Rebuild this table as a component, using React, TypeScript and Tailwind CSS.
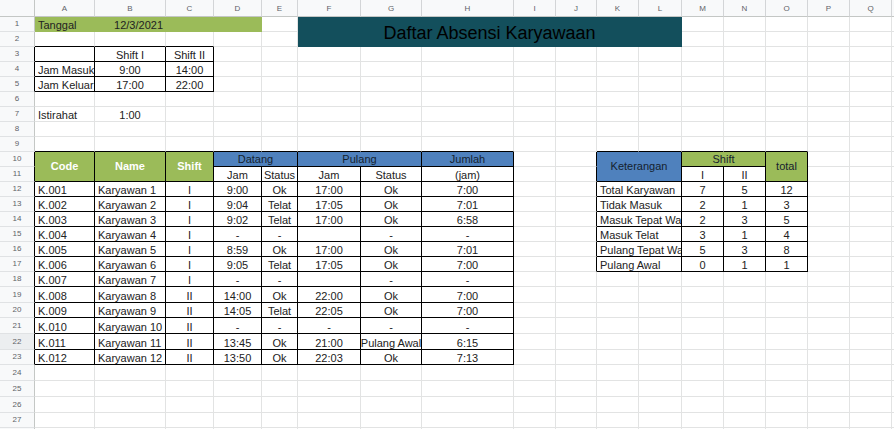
import React from 'react';

type Fill = 'green' | 'teal' | 'blue';
type Kind = 'body' | 'hw' | 'hd' | 'title';
type Cell = {
  text?: string;
  cs?: number;
  rs?: number;
  align?: 'l' | 'c' | 'r';
  fill?: Fill;
  kind?: Kind;
};

const NC = 18;
const NR = 28;
const LETTERS = ['A', 'B', 'C', 'D', 'E', 'F', 'G', 'H', 'I', 'J', 'K', 'L', 'M', 'N', 'O', 'P', 'Q', ''];

const MAIN: string[][] = [
  ['K.001', 'Karyawan 1', 'I', '9:00', 'Ok', '17:00', 'Ok', '7:00'],
  ['K.002', 'Karyawan 2', 'I', '9:04', 'Telat', '17:05', 'Ok', '7:01'],
  ['K.003', 'Karyawan 3', 'I', '9:02', 'Telat', '17:00', 'Ok', '6:58'],
  ['K.004', 'Karyawan 4', 'I', '-', '-', '', '-', '-'],
  ['K.005', 'Karyawan 5', 'I', '8:59', 'Ok', '17:00', 'Ok', '7:01'],
  ['K.006', 'Karyawan 6', 'I', '9:05', 'Telat', '17:05', 'Ok', '7:00'],
  ['K.007', 'Karyawan 7', 'I', '-', '-', '', '-', '-'],
  ['K.008', 'Karyawan 8', 'II', '14:00', 'Ok', '22:00', 'Ok', '7:00'],
  ['K.009', 'Karyawan 9', 'II', '14:05', 'Telat', '22:05', 'Ok', '7:00'],
  ['K.010', 'Karyawan 10', 'II', '-', '-', '-', '-', '-'],
  ['K.011', 'Karyawan 11', 'II', '13:45', 'Ok', '21:00', 'Pulang Awal', '6:15'],
  ['K.012', 'Karyawan 12', 'II', '13:50', 'Ok', '22:03', 'Ok', '7:13'],
];

const SUMMARY: string[][] = [
  ['Total Karyawan', '7', '5', '12'],
  ['Tidak Masuk', '2', '1', '3'],
  ['Masuk Tepat Waktu', '2', '3', '5'],
  ['Masuk Telat', '3', '1', '4'],
  ['Pulang Tepat Waktu', '5', '3', '8'],
  ['Pulang Awal', '0', '1', '1'],
];

function inTable(r: number, c: number): boolean {
  if (r >= 3 && r <= 5 && c >= 1 && c <= 3) return true;
  if (r >= 10 && r <= 23 && c >= 1 && c <= 8) return true;
  if (r >= 10 && r <= 17 && c >= 11 && c <= 15) return true;
  return false;
}

function buildGrid() {
  const g: (Cell | null | undefined)[][] = [];
  for (let r = 0; r <= NR + 1; r++) g.push(new Array(NC + 2).fill(undefined));
  const put = (r: number, c: number, cell: Cell) => {
    const rs = cell.rs ?? 1;
    const cs = cell.cs ?? 1;
    for (let i = 0; i < rs; i++)
      for (let j = 0; j < cs; j++) g[r + i][c + j] = null;
    g[r][c] = cell;
  };
  put(1, 1, { text: 'Tanggal', fill: 'green' });
  put(1, 2, { text: '12/3/2021', fill: 'green', align: 'r' });
  put(1, 3, { fill: 'green' });
  put(1, 4, { fill: 'green' });
  put(1, 6, { text: 'Daftar Absensi Karyawaan', cs: 7, rs: 2, fill: 'teal', kind: 'title' });

  put(3, 2, { text: 'Shift I', align: 'c' });
  put(3, 3, { text: 'Shift II', align: 'c' });
  put(4, 1, { text: 'Jam Masuk' });
  put(4, 2, { text: '9:00', align: 'c' });
  put(4, 3, { text: '14:00', align: 'c' });
  put(5, 1, { text: 'Jam Keluar' });
  put(5, 2, { text: '17:00', align: 'c' });
  put(5, 3, { text: '22:00', align: 'c' });
  put(7, 1, { text: 'Istirahat' });
  put(7, 2, { text: '1:00', align: 'c' });

  put(10, 1, { text: 'Code', rs: 2, fill: 'green', kind: 'hw' });
  put(10, 2, { text: 'Name', rs: 2, fill: 'green', kind: 'hw' });
  put(10, 3, { text: 'Shift', rs: 2, fill: 'green', kind: 'hw' });
  put(10, 4, { text: 'Datang', cs: 2, fill: 'blue', kind: 'hd' });
  put(10, 6, { text: 'Pulang', cs: 2, fill: 'blue', kind: 'hd' });
  put(10, 8, { text: 'Jumlah', fill: 'blue', kind: 'hd' });
  put(11, 4, { text: 'Jam', align: 'c' });
  put(11, 5, { text: 'Status', align: 'c' });
  put(11, 6, { text: 'Jam', align: 'c' });
  put(11, 7, { text: 'Status', align: 'c' });
  put(11, 8, { text: '(jam)', align: 'c' });

  put(10, 11, { text: 'Keterangan', cs: 2, rs: 2, fill: 'blue', kind: 'hd' });
  put(10, 13, { text: 'Shift', cs: 2, fill: 'green', kind: 'hd' });
  put(10, 15, { text: 'total', rs: 2, fill: 'green', kind: 'hd' });
  put(11, 13, { text: 'I', align: 'c' });
  put(11, 14, { text: 'II', align: 'c' });

  MAIN.forEach((row, i) => {
    row.forEach((t, j) => {
      put(12 + i, 1 + j, { text: t, align: j < 2 ? 'l' : 'c' });
    });
  });
  SUMMARY.forEach((row, i) => {
    put(12 + i, 11, { text: row[0], cs: 2 });
    put(12 + i, 13, { text: row[1], align: 'c' });
    put(12 + i, 14, { text: row[2], align: 'c' });
    put(12 + i, 15, { text: row[3], align: 'c' });
  });

  for (let r = 1; r <= NR; r++)
    for (let c = 1; c <= NC; c++) if (g[r][c] === undefined) g[r][c] = {};
  return g;
}

const GRID = buildGrid();

const BG: Record<Fill, string> = {
  green: 'bg-[#9bbb59]',
  teal: 'bg-[#134f5c]',
  blue: 'bg-[#4f81bd]',
};
const BR: Record<Fill, string> = {
  green: 'border-r-[#9bbb59]',
  teal: 'border-r-[#134f5c]',
  blue: 'border-r-[#4f81bd]',
};
const BB: Record<Fill, string> = {
  green: 'border-b-[#9bbb59]',
  teal: 'border-b-[#134f5c]',
  blue: 'border-b-[#4f81bd]',
};
const CS: Record<number, string> = { 1: '', 2: 'col-span-2', 7: 'col-span-7' };
const RS: Record<number, string> = { 1: '', 2: 'row-span-2' };

function SheetCell({ r, c, cell }: { r: number; c: number; cell: Cell }) {
  const cs = cell.cs ?? 1;
  const rs = cell.rs ?? 1;
  const c2 = c + cs - 1;
  const r2 = r + rs - 1;
  const rightBlack = inTable(r, c2) || inTable(r, c2 + 1);
  const bottomBlack = inTable(r2, c) || inTable(r2 + 1, c);
  const right = rightBlack ? 'border-r-black' : cell.fill ? BR[cell.fill] : 'border-r-[#e2e3e3]';
  const bottom = bottomBlack ? 'border-b-black' : cell.fill ? BB[cell.fill] : 'border-b-[#e2e3e3]';
  const bg = cell.fill ? BG[cell.fill] : 'bg-white';
  const kind = cell.kind ?? 'body';
  let txt = '';
  if (kind === 'title') {
    txt = 'items-center justify-center pt-[3px] text-[18px] text-black';
  } else if (kind === 'hw') {
    txt = 'items-center justify-center text-[11px] font-bold text-white';
  } else if (kind === 'hd') {
    txt = 'items-center justify-center text-[11px] text-[#15222e]';
  } else {
    const al = cell.align ?? 'l';
    const a =
      al === 'c' ? 'justify-center' : al === 'r' ? 'justify-end pr-[2px]' : 'justify-start pl-[3px]';
    txt = `items-end text-[11px] leading-[11px] text-[#222222] ${a}`;
  }
  return (
    <div
      className={`flex min-w-0 overflow-hidden whitespace-nowrap border-r border-b ${CS[cs]} ${RS[rs]} ${bg} ${right} ${bottom} ${txt}`}
    >
      {cell.text ? <span>{cell.text}</span> : null}
    </div>
  );
}

export default function App() {
  const items: React.ReactNode[] = [];
  items.push(
    <div
      key="corner"
      className="border-r border-b border-r-[#c4c7c5] border-b-[#c4c7c5] bg-[#f8f9fa]"
    />
  );
  LETTERS.forEach((l, i) => {
    items.push(
      <div
        key={`h${i}`}
        className="flex items-center justify-center border-r border-b border-r-[#d3d5d7] border-b-[#c4c7c5] bg-[#f8f9fa] pt-[1px] text-[8px] text-[#5f6368]"
      >
        {l}
      </div>
    );
  });
  for (let r = 1; r <= NR; r++) {
    const black = inTable(r, 1);
    items.push(
      <div
        key={`rn${r}`}
        className={`flex items-center justify-center border-r border-b border-b-[#e0e2e4] text-[8px] text-[#5f6368] ${
          black ? 'border-r-black' : 'border-r-[#c4c7c5]'
        } ${r === 22 ? 'bg-[#eceef0]' : 'bg-[#f8f9fa]'}`}
      >
        {r}
      </div>
    );
    for (let c = 1; c <= NC; c++) {
      const cell = GRID[r][c];
      if (!cell) continue;
      items.push(<SheetCell key={`c${r}_${c}`} r={r} c={c} cell={cell} />);
    }
  }

  return (
    <div className="h-[429px] w-[894px] overflow-hidden bg-white font-['Liberation_Sans',Arial,sans-serif]">
      <div className="grid grid-cols-[35px_60px_71px_48px_48px_36px_63px_61px_92px_42px_41px_42px_43px_42px_42px_42px_42px_42px_40px] grid-rows-[17px_repeat(18,15px)_16px_15px_16px_16px_15px_16px_16px_16px_15px_15px]">
        {items}
      </div>
    </div>
  );
}
